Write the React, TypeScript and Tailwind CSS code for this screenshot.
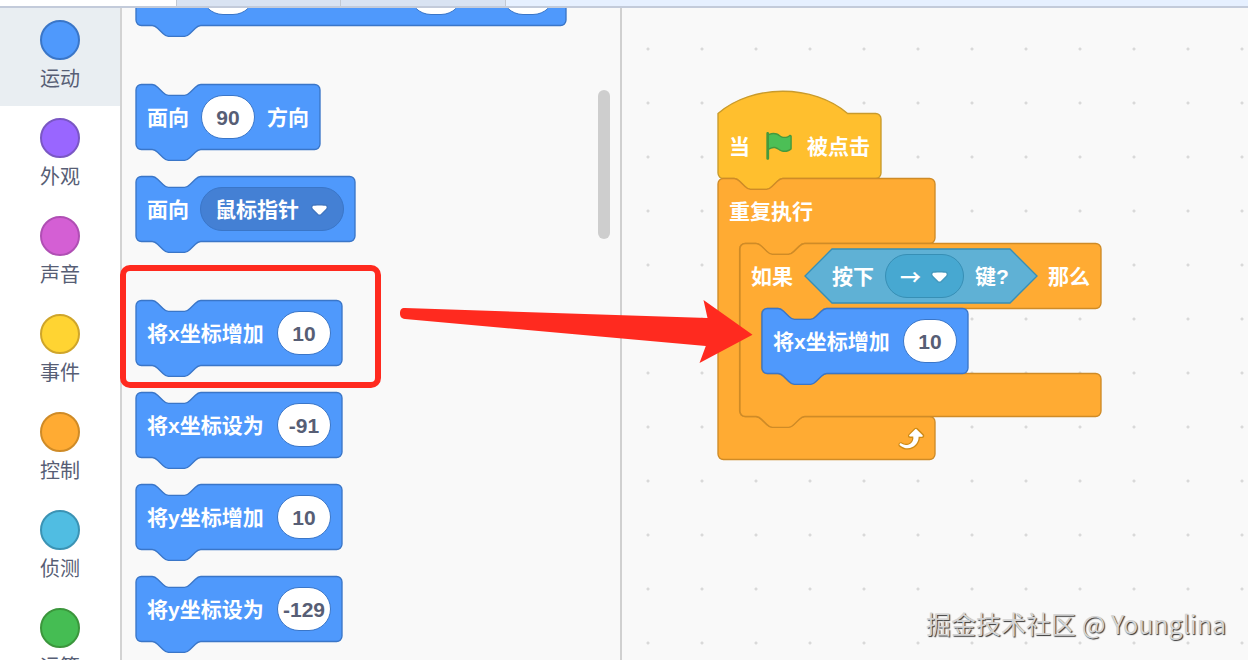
/**
 * Block Editor - category menu, block palette and script workspace
 */

import React from 'react';

// Pixels per block unit
const SCALE = 1.35;
const ROW_HEIGHT = 65;
const FOOT_HEIGHT = 43;

const NOTCH_RIGHT = 'c 2,0 3,1 4,2 l 4,4 c 1,1 2,2 4,2 h 12 c 2,0 3,-1 4,-2 l 4,-4 c 1,-1 2,-2 4,-2';
const NOTCH_LEFT = 'c -2,0 -3,1 -4,2 l -4,4 c -1,1 -2,2 -4,2 h -12 c -2,0 -3,-1 -4,-2 l -4,-4 c -1,-1 -2,-2 -4,-2';
const TOP_START = `M 0,4 A 4,4 0 0,1 4,0 H 12 ${NOTCH_RIGHT}`;
const BOTTOM_END = `H 48 ${NOTCH_LEFT} H 4 a 4,4 0 0,1 -4,-4 z`;

const rightSide = (width: number, height: number): string =>
  `H ${width - 4} a 4,4 0 0,1 4,4 v ${height - 8} a 4,4 0 0,1 -4,4`;

const stackPath = (width: number): string =>
  `${TOP_START} ${rightSide(width / SCALE, ROW_HEIGHT / SCALE)} ${BOTTOM_END}`;

const hatPath = (width: number): string =>
  `M 0,0 c 25,-22 71,-22 96,0 ${rightSide(width / SCALE, ROW_HEIGHT / SCALE)} ${BOTTOM_END}`;

const loopPath = (width: number, innerHeight: number): string =>
  [
    TOP_START,
    rightSide(width / SCALE, ROW_HEIGHT / SCALE),
    `H 64 ${NOTCH_LEFT} h -8 a 4,4 0 0,0 -4,4`,
    `v ${innerHeight / SCALE - 8} a 4,4 0 0,0 4,4 h 8 ${NOTCH_RIGHT}`,
    rightSide(width / SCALE, FOOT_HEIGHT / SCALE),
  ].join(' ');

type Tone = 'motion' | 'event' | 'control' | 'sensing';

const tones: Record<Tone, string> = {
  motion: 'fill-[#4f99fc] stroke-[#3a76c8]',
  event: 'fill-[#ffbf2e] stroke-[#c99b2c]',
  control: 'fill-[#ffab33] stroke-[#cf8b27]',
  sensing: 'fill-[#5fb1d5] stroke-[#378fb5]',
};

const Shape: React.FC<{ d: string; tone: Tone }> = ({ d, tone }) => (
  <svg className="absolute inset-0 h-full w-full overflow-visible" aria-hidden="true">
    <path d={d} transform={`translate(0 0.5) scale(${SCALE})`} strokeWidth="1" className={tones[tone]} />
  </svg>
);

interface BlockProps {
  width: number;
  children?: React.ReactNode;
}

const rowClass = 'relative flex h-[65px] items-center justify-between px-[11px]';

const StackBlock: React.FC<BlockProps> = ({ width, children }) => (
  <div className="relative shrink-0" style={{ width }}>
    <Shape d={stackPath(width)} tone="motion" />
    <div className={rowClass}>{children}</div>
  </div>
);

const HatBlock: React.FC<BlockProps> = ({ width, children }) => (
  <div className="relative" style={{ width }}>
    <Shape d={hatPath(width)} tone="event" />
    <div className={rowClass}>{children}</div>
  </div>
);

interface LoopBlockProps extends BlockProps {
  innerHeight: number;
  header: React.ReactNode;
  footer?: React.ReactNode;
  closed?: boolean;
}

const LoopBlock: React.FC<LoopBlockProps> = ({ width, innerHeight, header, footer, closed, children }) => {
  const end = closed ? 'H 4 a 4,4 0 0,1 -4,-4 z' : BOTTOM_END;

  return (
    <div className="relative" style={{ width }}>
      <Shape d={`${loopPath(width, innerHeight)} ${end}`} tone="control" />
      <div className={rowClass}>{header}</div>
      <div className="pl-[22px]">{children}</div>
      <div className="relative flex h-[43px] items-center justify-end pr-[10px]">{footer}</div>
    </div>
  );
};

const Label: React.FC<{ children: React.ReactNode }> = ({ children }) => (
  <span className="shrink-0 whitespace-nowrap pt-0.5 text-white">{children}</span>
);

const NumberField: React.FC<{ label: string; value: string }> = ({ label, value }) => (
  <input
    type="text"
    aria-label={label}
    defaultValue={value}
    className="h-[44px] w-[54px] shrink-0 rounded-full border border-[#3a76c8] bg-white px-0 pb-0 pt-0.5 text-center text-[#575e75] outline-none"
  />
);

const Caret: React.FC = () => (
  <svg viewBox="0 0 12.71 8.79" className="pointer-events-none absolute right-[16px] mt-0.5 h-[12px] w-[17px]" aria-hidden="true">
    <path
      fill="#231f20"
      opacity="0.1"
      d="M12.71,2.44A2.41,2.41,0,0,1,12,4.16L8.08,8.08a2.45,2.45,0,0,1-3.45,0L0.72,4.16A2.42,2.42,0,0,1,0,2.44,2.48,2.48,0,0,1,.71.71C1,0.47,1.43,0,6.36,0S11.75,0.46,12,.71A2.44,2.44,0,0,1,12.71,2.44Z"
    />
    <path
      fill="#fff"
      d="M6.36,7.79a1.43,1.43,0,0,1-1-.42L1.42,3.45a1.44,1.44,0,0,1,0-2c0.56-.56,9.31-0.56,9.87,0a1.44,1.44,0,0,1,0,2L7.37,7.37A1.43,1.43,0,0,1,6.36,7.79Z"
    />
  </svg>
);

const Dropdown: React.FC<{ label: string; value: string; className: string }> = ({ label, value, className }) => (
  <div className="relative flex shrink-0 items-center">
    <select
      aria-label={label}
      className={`h-[44px] appearance-none rounded-full border pl-[14px] pt-0.5 text-white outline-none ${className}`}
    >
      <option>{value}</option>
    </select>
    <Caret />
  </div>
);

const FlagIcon: React.FC = () => (
  <svg viewBox="0 0 24 24" className="h-8 w-8 shrink-0" aria-hidden="true">
    <path
      fill="#45993d"
      d="M20.8,3.7c-0.4-0.2-0.9-0.1-1.2,0.2c-2,1.6-4.8,1.6-6.8,0c-2.3-1.9-5.6-2.3-8.3-1v-0.4c0-0.6-0.5-1-1-1s-1,0.4-1,1v18.8c0,0.5,0.5,1,1,1h0.1c0.5,0,1-0.5,1-1v-6.4c1-0.7,2.1-1.2,3.4-1.3c1.2,0,2.4,0.4,3.4,1.2c2.9,2.3,7,2.3,9.8,0c0.3-0.2,0.4-0.5,0.4-0.9V4.7C21.6,4.2,21.3,3.8,20.8,3.7z"
    />
    <path
      fill="#4cbf56"
      d="M20.6,4.8l-0.1,9.1c-2.5,2-6.1,2-8.6,0.1c-1.1-0.9-2.5-1.4-4-1.4c-1.2,0.1-2.3,0.5-3.4,1.1V4C7,2.6,10,2.9,12.2,4.6c2.4,1.9,5.7,1.9,8.1,0c0.1,0,0.1,0,0.2,0C20.5,4.7,20.6,4.7,20.6,4.8z"
    />
  </svg>
);

const RepeatIcon: React.FC = () => (
  <svg viewBox="0 0 24 24" className="h-8 w-8" aria-hidden="true">
    <path
      fill="#cf8b17"
      d="M23.3,11c-0.3,0.6-0.9,1-1.5,1h-1.6c-0.1,1.3-0.5,2.5-1.1,3.6c-0.9,1.7-2.3,3.2-4.1,4.1c-1.7,0.9-3.6,1.2-5.5,0.9c-1.8-0.3-3.5-1.1-4.9-2.3c-0.7-0.7-0.7-1.9,0-2.6c0.6-0.6,1.6-0.7,2.3-0.2H7c0.9,0.6,1.9,0.9,2.9,0.9s1.9-0.3,2.7-0.9c1.1-0.8,1.8-2.1,1.8-3.5h-1.5c-0.9,0-1.7-0.7-1.7-1.7c0-0.4,0.2-0.9,0.5-1.2l4.4-4.4c0.7-0.6,1.7-0.6,2.4,0L23,9.2C23.5,9.7,23.6,10.4,23.3,11z"
    />
    <path
      fill="#fff"
      d="M21.8,11h-2.6c0,1.5-0.3,2.9-1,4.2c-0.8,1.6-2.1,2.8-3.7,3.6c-1.5,0.8-3.3,1.1-4.9,0.8c-1.6-0.2-3.2-1-4.4-2.1c-0.4-0.3-0.4-0.9-0.1-1.2c0.3-0.4,0.9-0.4,1.2-0.1l0,0c1,0.7,2.2,1.1,3.4,1.1s2.3-0.3,3.3-1c0.9-0.6,1.6-1.5,2-2.6c0.3-0.9,0.4-1.8,0.2-2.8h-2.4c-0.4,0-0.7-0.3-0.7-0.7c0-0.2,0.1-0.3,0.2-0.4l4.4-4.4c0.3-0.3,0.7-0.3,0.9,0L22,9.8c0.3,0.3,0.4,0.6,0.3,0.9S22,11,21.8,11z"
    />
  </svg>
);

const categories = [
  { name: '运动', color: 'bg-[#4f99fc] border-[#3a76c8]', active: true },
  { name: '外观', color: 'bg-[#9966ff] border-[#7a57c4]' },
  { name: '声音', color: 'bg-[#d45fd4] border-[#b04fb4]' },
  { name: '事件', color: 'bg-[#ffd432] border-[#cfa52a]' },
  { name: '控制', color: 'bg-[#ffab33] border-[#cf8b27]' },
  { name: '侦测', color: 'bg-[#50bde2] border-[#3b93b4]' },
  { name: '运算', color: 'bg-[#45bd53] border-[#3b963c]' },
];

const CategoryMenu: React.FC = () => (
  <nav className="w-[122px] shrink-0 overflow-hidden border-r-2 border-[#d3d3d3] bg-white">
    {categories.map((category) => (
      <button
        key={category.name}
        type="button"
        className={`flex h-[98px] w-full flex-col items-center gap-1 pt-3 ${category.active ? 'bg-[#e9eef2]' : 'bg-white'}`}
      >
        <span className={`h-10 w-10 shrink-0 rounded-full border-2 ${category.color}`} />
        <span className="text-[20px] leading-[30px] text-[#575e75]">{category.name}</span>
      </button>
    ))}
  </nav>
);

const motionBlocks = [
  { label: '将x坐标增加', value: '10' },
  { label: '将x坐标设为', value: '-91' },
  { label: '将y坐标增加', value: '10' },
  { label: '将y坐标设为', value: '-129' },
];

const Palette: React.FC = () => (
  <section className="relative w-[500px] shrink-0 overflow-hidden border-r-2 border-[#d0d0d0] bg-[#f9f9f9] pl-[14px]">
    <div className="-mt-12 flex flex-col gap-[59px] text-[21px] font-bold">
      <StackBlock width={430}>
        <div className="flex w-full justify-between pl-[54px]">
          <NumberField label="秒" value="" />
          <div className="flex gap-[38px]">
            <NumberField label="x" value="" />
            <NumberField label="y" value="" />
          </div>
        </div>
      </StackBlock>
      <div className="flex flex-col gap-[27px]">
        <StackBlock width={184}>
          <Label>面向</Label>
          <NumberField label="方向" value="90" />
          <Label>方向</Label>
        </StackBlock>
        <StackBlock width={219}>
          <Label>面向</Label>
          <Dropdown label="面向" value="鼠标指针" className="w-[144px] border-[#3a76c8] bg-[#4480d4]" />
        </StackBlock>
      </div>
      <div className="flex flex-col gap-[27px]">
        {motionBlocks.map((block) => (
          <StackBlock key={block.label} width={206}>
            <Label>{block.label}</Label>
            <NumberField label={block.label} value={block.value} />
          </StackBlock>
        ))}
      </div>
    </div>
    <div className="absolute right-[10px] top-[82px] h-[149px] w-3 rounded-full bg-[#cecece]" />
  </section>
);

const KeyPressed: React.FC = () => (
  <div className="relative flex h-[54px] w-[232px] shrink-0 items-center justify-center">
    <svg className="absolute inset-0 h-full w-full overflow-visible" aria-hidden="true">
      <path d="M 27,0 H 205 L 232,27 L 205,54 H 27 L 0,27 z" strokeWidth="1.35" className={tones.sensing} />
    </svg>
    <div className="relative flex items-center gap-[11px]">
      <Label>按下</Label>
      <Dropdown
        label="按下"
        value="→"
        className="w-[79px] border-[#378fb5] bg-[#47a8d1] font-['Noto_Sans_CJK_SC',sans-serif]"
      />
      <Label>键?</Label>
    </div>
  </div>
);

const Workspace: React.FC = () => (
  <main className="relative min-w-0 flex-1 overflow-hidden bg-[#f9f9f9] bg-[radial-gradient(circle,#d9d9d9_1px,transparent_2px)] bg-[size:54px_54px] bg-[position:-1px_14px]">
    <div className="absolute left-[96px] top-[105px] text-[21px] font-bold">
      <HatBlock width={163}>
        <Label>当</Label>
        <FlagIcon />
        <Label>被点击</Label>
      </HatBlock>
      <LoopBlock width={217} innerHeight={173} closed header={<Label>重复执行</Label>} footer={<RepeatIcon />}>
        <LoopBlock
          width={361}
          innerHeight={65}
          header={
            <>
              <Label>如果</Label>
              <KeyPressed />
              <Label>那么</Label>
            </>
          }
        >
          <StackBlock width={206}>
            <Label>将x坐标增加</Label>
            <NumberField label="将x坐标增加" value="10" />
          </StackBlock>
        </LoopBlock>
      </LoopBlock>
    </div>
  </main>
);

const Annotations: React.FC = () => (
  <div className="pointer-events-none absolute inset-0">
    <div className="absolute left-[120px] top-[265px] h-[123px] w-[261px] rounded-[10px] border-[6px] border-[#ff2a1f]" />
    <svg className="absolute inset-0 h-full w-full" aria-hidden="true">
      <path
        fill="#ff2a1f"
        d="M 405,308 L 707.5,318 L 703.5,300 L 752.5,334.7 L 699.5,363 L 705.8,346 L 405,319 C 401,318.5 400,316 400,313.5 C 400,310 401,308 405,308 z"
      />
    </svg>
    <p className="absolute bottom-[19px] right-[22px] font-['Noto_Sans_CJK_SC',sans-serif] text-[25px] leading-9 text-[#d4d4d4] [text-shadow:1px_1px_1px_#333]">
      掘金技术社区 @ Younglina
    </p>
  </div>
);

const App: React.FC = () => (
  <div className="relative flex h-screen flex-col overflow-hidden bg-white font-['Liberation_Sans','Noto_Sans_CJK_SC',sans-serif]">
    <header className="flex h-2 shrink-0 border-b-2 border-[#c3cbda] bg-[#e6f0ff]">
      <div className="w-[176px] bg-white" />
      <div className="w-[165px] border-x border-[#c3c9d3] bg-[#d9e3f2]" />
      <div className="w-[165px] border-r border-[#c3c9d3] bg-[#d9e3f2]" />
    </header>
    <div className="flex min-h-0 flex-1">
      <CategoryMenu />
      <Palette />
      <Workspace />
    </div>
    <Annotations />
  </div>
);

export default App;
